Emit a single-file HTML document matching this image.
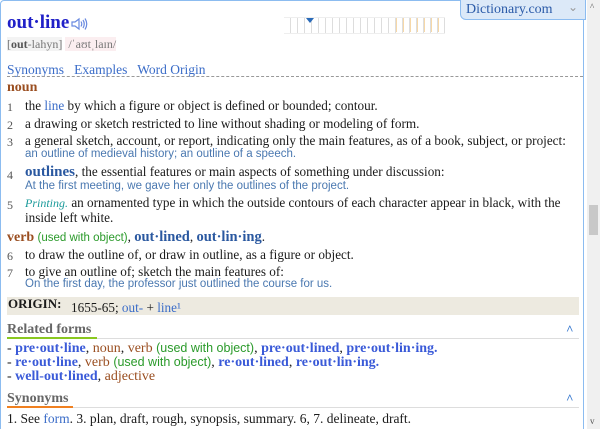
<!DOCTYPE html>
<html style="overflow:hidden;height:429px"><head><meta charset="utf-8"><style>
body{margin:0;width:600px;height:429px;overflow:hidden;background:#fff;font-family:"Liberation Serif",serif;font-size:13.2px;color:#1a1a1a;position:relative}
.a{position:absolute;white-space:nowrap}
.frame{position:absolute;left:0;top:0;width:584px;height:440px;border:1px solid #8cbcf0;border-radius:4px 4px 0 0;box-sizing:border-box}
.sb{position:absolute;left:587px;top:0;width:13px;height:429px;background:#f0f0f0}
.b{color:#3a6cc8}
.n{color:#555;font-size:12px}
.ex{font-family:"Liberation Sans",sans-serif;color:#4a78b0;font-size:11.5px}
.br{color:#9a4e20}
.g{color:#2a9a2a;font-family:"Liberation Sans",sans-serif;font-size:11.5px}
.rl{color:#3a5ad8;font-weight:bold}
.rel{font-size:14px}
</style></head><body>
<div class="frame"></div>
<div class="sb"><div style="position:absolute;left:2px;top:205px;width:9px;height:30px;background:#c8c8c8"></div>
<div class="a" style="left:3px;top:2px;font-size:9px;color:#555">^</div>
<div class="a" style="left:3px;top:416px;font-size:9px;color:#555">v</div></div>
<div class="a" style="left:460px;top:-1px;width:124px;height:20px;background:#dce9f8;border:1px solid #8cbcf0;border-top:none;border-radius:0 0 0 6px"></div>
<div class="a" style="left:466px;top:2px;font-size:14px;color:#2a5aa8">Dictionary.com</div>
<div class="a" style="left:568px;top:0px;font-size:12px;color:#999">&#8964;</div>
<div class="a" style="left:284px;top:17px;width:161px;height:15px;border-top:1px solid #eee;border-bottom:1px solid #eee;background:repeating-linear-gradient(90deg,transparent 0 6px,#ddd 6px 7px);"></div>
<div class="a" style="left:390px;top:18px;width:55px;height:14px;background:repeating-linear-gradient(90deg,transparent 0 6px,#f6d8a8 6px 7px)"></div>
<div class="a" style="left:306px;top:18px;width:0;height:0;border-left:4px solid transparent;border-right:4px solid transparent;border-top:5px solid #2a6ab8"></div>
<div class="a" style="left:7px;top:12px;font-size:19px;font-weight:bold;color:#2020c8">out·line</div>
<svg class="a" style="left:71px;top:17px" width="18" height="14" viewBox="0 0 18 14" fill="none" stroke="#6a8ae0" stroke-width="1.2"><path d="M1 5h3l4-3v10l-4-3H1z"/><path d="M10 4.5q1.5 2.5 0 5"/><path d="M12 3q2.5 4 0 8"/><path d="M14 1.5q3.5 5.5 0 11"/></svg>
<div class="a" style="left:7px;top:37px;font-size:12px;color:#777"><span style="background:#f3f3f3">[<b style="color:#555">out</b>-lahyn]</span> <span style="background:#fbeef0;color:#777">&nbsp;/ˈaʊtˌlaɪn/</span></div>
<div class="a b" style="left:7px;top:62px;font-size:13.5px">Synonyms &nbsp; Examples &nbsp; Word Origin</div>
<div class="a" style="left:7px;top:76px;width:576px;border-top:1px dashed #999"></div>
<div class="a br" style="left:7px;top:80px;font-size:14px;font-weight:bold">noun</div>
<div class="a" style="left:7px;top:99px"><span class="n">1</span></div><div class="a" style="left:25px;top:98px">the <span class="b">line</span> by which a figure or object is defined or bounded; contour.</div>
<div class="a" style="left:7px;top:117px"><span class="n">2</span></div><div class="a" style="left:25px;top:116px">a drawing or sketch restricted to line without shading or modeling of form.</div>
<div class="a" style="left:7px;top:134px"><span class="n">3</span></div><div class="a" style="left:25px;top:133px">a general sketch, account, or report, indicating only the main features, as of a book, subject, or project:</div>
<div class="a ex" style="left:25px;top:148px">an outline of medieval history; an outline of a speech.</div>
<div class="a" style="left:7px;top:167px"><span class="n">4</span></div><div class="a" style="left:25px;top:164px"><span style="color:#2a58a0;font-weight:bold;font-size:15px">outlines</span>, the essential features or main aspects of something under discussion:</div>
<div class="a ex" style="left:25px;top:180px">At the first meeting, we gave her only the outlines of the project.</div>
<div class="a" style="left:7px;top:197px"><span class="n">5</span></div><div class="a" style="left:25px;top:195px"><i style="color:#1a9a9a;font-size:12px">Printing.</i> an ornamented type in which the outside contours of each character appear in black, with the</div>
<div class="a" style="left:25px;top:210px">inside left white.</div>
<div class="a" style="left:7px;top:229px"><span class="br" style="font-size:14px;font-weight:bold">verb</span> <span class="g">(used with object)</span>, <span style="color:#2a58a0;font-weight:bold;font-size:14.5px">out·lined</span>, <span style="color:#2a58a0;font-weight:bold;font-size:14.5px">out·lin·ing</span>.</div>
<div class="a" style="left:7px;top:248px"><span class="n">6</span></div><div class="a" style="left:25px;top:247px">to draw the outline of, or draw in outline, as a figure or object.</div>
<div class="a" style="left:7px;top:265px"><span class="n">7</span></div><div class="a" style="left:25px;top:264px">to give an outline of; sketch the main features of:</div>
<div class="a ex" style="left:25px;top:278px">On the first day, the professor just outlined the course for us.</div>
<div class="a" style="left:7px;top:297px;width:572px;height:18px;background:#edeae0"></div>
<div class="a" style="left:8px;top:296px;font-weight:bold;font-size:13px">ORIGIN:</div>
<div class="a" style="left:71px;top:300px">1655-65; <span class="b">out-</span> + <span class="b">line¹</span></div>
<div class="a" style="left:7px;top:322px;font-size:14px;font-weight:bold;color:#666">Related forms</div>
<div class="a" style="left:7px;top:338px;width:572px;border-top:1px solid #ddd"></div>
<div class="a" style="left:7px;top:337px;width:90px;border-top:2px solid #8ac820"></div>
<div class="a" style="left:566px;top:322px;color:#3a7ad0;font-size:13px;font-weight:bold">^</div>
<div class="a rel" style="left:7px;top:341px">- <span class="rl">pre·out·line</span>, <span class="br">noun</span>, <span class="br">verb</span> <span class="g" style="font-size:12.5px">(used with object)</span>, <span class="rl">pre·out·lined</span>, <span class="rl">pre·out·lin·ing.</span></div>
<div class="a rel" style="left:7px;top:355px">- <span class="rl">re·out·line</span>, <span class="br">verb</span> <span class="g" style="font-size:12.5px">(used with object)</span>, <span class="rl">re·out·lined</span>, <span class="rl">re·out·lin·ing.</span></div>
<div class="a rel" style="left:7px;top:369px">- <span class="rl">well-out·lined</span>, <span class="br">adjective</span></div>
<div class="a" style="left:7px;top:391px;font-size:14px;font-weight:bold;color:#666">Synonyms</div>
<div class="a" style="left:7px;top:407px;width:572px;border-top:1px solid #ddd"></div>
<div class="a" style="left:7px;top:406px;width:66px;border-top:2px solid #f08020"></div>
<div class="a" style="left:566px;top:391px;color:#3a7ad0;font-size:13px;font-weight:bold">^</div>
<div class="a" style="left:7px;top:411px;font-size:13.5px">1. See <span class="b">form</span>. 3. plan, draft, rough, synopsis, summary. 6, 7. delineate, draft.</div>
</body></html>
